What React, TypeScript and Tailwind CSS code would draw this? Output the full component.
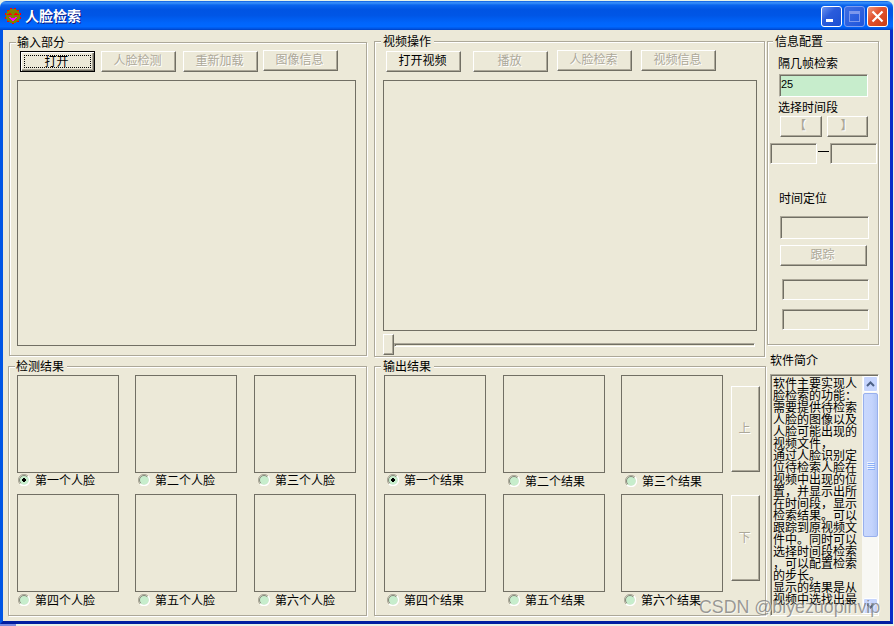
import type { ReactNode } from "react";

const cjk = "font-['Liberation_Sans','Noto_Sans_CJK_SC',sans-serif]";

function Group({ title, className, legend, children }: { title: string; className: string; legend: string; children: ReactNode }) {
  return (
    <section className={`flex flex-col items-start border border-[#aca899] shadow-[1px_1px_0_#fff,inset_1px_1px_0_#fff] ${className}`}>
      <h2 className={`-mt-[7px] h-3 shrink-0 bg-[#ece9d8] pt-px ${legend}`}>{title}</h2>
      {children}
    </section>
  );
}

function Button({ className, children, disabled = true }: { className: string; children: ReactNode; disabled?: boolean }) {
  return (
    <button
      className={`flex shrink-0 items-center justify-center border border-t-white border-l-white border-r-[#716f64] border-b-[#716f64] pr-[2px] pb-px shadow-[inset_-1px_-1px_0_#aca899] ${
        disabled ? "text-[#aca899] [text-shadow:1px_1px_0_#fff]" : "text-black"
      } ${className}`}
    >
      {children}
    </button>
  );
}

function Sunken({ className, children }: { className: string; children?: ReactNode }) {
  return (
    <div className={`shrink-0 border border-t-[#aca899] border-l-[#aca899] border-r-white border-b-white shadow-[inset_1px_1px_0_#716f64] ${className}`}>
      {children}
    </div>
  );
}

function Radio({ checked }: { checked?: boolean }) {
  return (
    <svg width="12" height="12" viewBox="0 0 12 12" className="shrink-0">
      <circle cx="6" cy="6" r="4.8" fill="#c7edcc" />
      <path d="M2 10A5.5 5.5 0 0 1 10 2" fill="none" stroke="#aca899" />
      <path d="M2.8 9.2A4.5 4.5 0 0 1 9.2 2.8" fill="none" stroke="#716f64" strokeWidth="0.8" />
      <path d="M10 2A5.5 5.5 0 0 1 2 10" fill="none" stroke="#fff" strokeWidth="1.2" />
      {checked && <path d="M5 4h2v1h1v2H7v1H5V7H4V5h1z" fill="#000" />}
    </svg>
  );
}

function Slot({ label, checked, shift }: { label: string; checked?: boolean; shift: string }) {
  return (
    <div className="flex h-[119px] w-[102px] flex-col">
      <div className="h-[98px] w-[102px] shrink-0 border border-[#716f64]" />
      <label className={`flex h-[13px] items-start gap-[5px] ${shift}`}>
        <Radio checked={checked} />
        <span className="pt-px">{label}</span>
      </label>
    </div>
  );
}

const intro = `软件主要实现人
脸检索的功能：
需要提供待检索
人脸的图像以及
人脸可能出现的
视频文件，
通过人脸识别定
位待检索人脸在
视频中出现的位
置，并显示出所
在时间段，显示
检索结果。可以
跟踪到原视频文
件中。同时可以
选择时间段检索
，可以配置检索
的步长。
显示的结果是从
视频中选找出最`;

function FaceIcon() {
  return (
    <svg width="16" height="16" viewBox="0 0 16 16" shapeRendering="crispEdges">
      <path d="M5 1h6v1h2v1h1v2h1v6h-1v2h-1v1h-2v1H5v-1H3v-1H2v-2H1V5h1V3h1V2h2z" fill="#808000" />
      <path d="M5 0h2v1H5zM9 0h2v1H9zM2 2h2v1H2zM12 2h2v1h-2zM0 5h1v2H0zM15 5h1v2h-1zM0 9h1v2H0zM15 9h1v2h-1zM2 13h2v1H2zM12 13h2v1h-2zM7 15h2v1H7z" fill="#f00" />
      <path d="M4 5h2v1h1v1H2V6h2zM10 5h2v1h2v1H9V6h1z" fill="#f00" />
      <path d="M4 9h2v1h4V9h2v1h-1v1h-1v1H9v1H7v-1H6v-1H5v-1H4z" fill="#f0f" />
    </svg>
  );
}

function TitleBar() {
  return (
    <header className="flex h-[29px] shrink-0 items-center rounded-t-[6px] bg-[linear-gradient(180deg,#0a5be0_0%,#3c94fb_6%,#0b66ee_14%,#0054e3_30%,#0056e6_50%,#0065fb_75%,#0068ff_88%,#0053e0_96%,#003fc0_100%)] pr-[5px] pl-[5px]">
      <FaceIcon />
      <h1 className="mt-px ml-[4px] text-[14px] leading-[14px] font-bold text-white [text-shadow:1px_1px_0_#0a1883]">人脸检索</h1>
      <div className="mt-[2px] ml-auto flex gap-[2px]">
        <span className="flex size-[21px] items-end rounded-[3px] border border-white bg-[linear-gradient(135deg,#6c94f0,#2a5cdc_40%,#1b4fd2)] pb-[4px] pl-[4px]">
          <span className="h-[3px] w-[7px] bg-white" />
        </span>
        <span className="flex size-[21px] items-center justify-center rounded-[3px] border border-[#7c9df0] bg-[linear-gradient(135deg,#3f6ee2,#1e55dc)]">
          <span className="size-[11px] border border-t-[3px] border-[#7c98ec]" />
        </span>
        <span className="flex size-[21px] items-center justify-center rounded-[3px] border border-white bg-[linear-gradient(135deg,#f0987c,#e25431_40%,#cb3c12)]">
          <svg width="13" height="13" viewBox="0 0 13 13">
            <path d="M1.5 1.500l10 10M11.5 1.500l-10 10" stroke="#fff" strokeWidth="2.2" />
          </svg>
        </span>
      </div>
    </header>
  );
}

function ScrollBar() {
  return (
    <div className="ml-auto flex h-[238px] w-[16px] shrink-0 flex-col items-center bg-[#f8f8f4]">
      <div className="flex h-[16px] w-[15px] items-center justify-center rounded-[2px] border border-white bg-[#c6d5fd]">
        <svg width="9" height="6" viewBox="0 0 9 6">
          <path d="M1 5l3.500-3.500L8 5" fill="none" stroke="#4d6185" strokeWidth="2" />
        </svg>
      </div>
      <div className="mt-px flex h-[144px] w-[15px] flex-col items-center justify-center gap-px rounded-[2px] border border-[#98b0ee] bg-[linear-gradient(90deg,#c9d8fc,#c4d4fd_60%,#b4c8f6)]">
        <i className="h-px w-[7px] bg-[#eef4fe] shadow-[1px_1px_0_#8cb0f8]" />
        <i className="h-px w-[7px] bg-[#eef4fe] shadow-[1px_1px_0_#8cb0f8]" />
        <i className="h-px w-[7px] bg-[#eef4fe] shadow-[1px_1px_0_#8cb0f8]" />
        <i className="h-px w-[7px] bg-[#eef4fe] shadow-[1px_1px_0_#8cb0f8]" />
      </div>
      <div className="mt-auto flex h-[16px] w-[15px] items-center justify-center rounded-[2px] border border-white bg-[#c6d5fd]">
        <svg width="9" height="6" viewBox="0 0 9 6">
          <path d="M1 1l3.500 3.500L8 1" fill="none" stroke="#4d6185" strokeWidth="2" />
        </svg>
      </div>
    </div>
  );
}

export default function App() {
  return (
    <div className={`relative flex h-[626px] w-[894px] flex-col overflow-hidden bg-[#e6f2e8] pt-px text-[12px] leading-[12px] whitespace-nowrap text-black ${cjk}`}>
      <div className="flex h-[623px] w-[893px] flex-col">
        <TitleBar />
        <div className="flex h-[594px] border-r-[3px] border-b-[3px] border-l-[3px] border-r-[#0a2cc8] border-b-[#001ea0] border-l-[#0055e5] bg-[#ece9d8]">
          <div className="flex w-[371px] shrink-0 flex-col">
            <Group title="输入部分" className="mt-[12px] ml-[6px] h-[314px] w-[358px]" legend="ml-[6px] pl-px pr-[3px]">
              <div className="mt-[2px] ml-[10px] flex h-[22px] items-start">
                <button className="mt-px flex h-[21px] w-[75px] border border-black p-[3px] shadow-[inset_1px_1px_0_#fff,inset_-1px_-1px_0_#716f64,inset_-2px_-2px_0_#aca899]">
                  <span className="flex h-full w-full items-center justify-center border border-dotted border-black pr-[2px]">打开</span>
                </button>
                <Button className="mt-px ml-[6px] h-[21px] w-[75px]">人脸检测</Button>
                <Button className="mt-px ml-[7px] h-[21px] w-[75px]">重新加载</Button>
                <Button className="ml-[5px] h-[21px] w-[75px]">图像信息</Button>
              </div>
              <div className="mt-[8px] ml-[7px] h-[266px] w-[339px] border border-[#716f64]" />
            </Group>
            <Group title="检测结果" className="mt-[10px] ml-[5px] h-[250px] w-[359px]" legend="ml-[6px] pl-px pr-[3px]">
              <div className="mt-[3px] ml-[8px] flex">
                <div className="flex flex-col">
                  <Slot label="第一个人脸" checked shift="mt-px ml-px" />
                  <Slot label="第四个人脸" shift="mt-[2px] ml-px" />
                </div>
                <div className="ml-[16px] flex flex-col">
                  <Slot label="第二个人脸" shift="mt-px ml-[3px]" />
                  <Slot label="第五个人脸" shift="mt-[2px] ml-[3px]" />
                </div>
                <div className="ml-[17px] flex flex-col">
                  <Slot label="第三个人脸" shift="mt-px ml-[4px]" />
                  <Slot label="第六个人脸" shift="mt-[2px] ml-[4px]" />
                </div>
              </div>
            </Group>
          </div>

          <div className="flex w-[393px] shrink-0 flex-col">
            <Group title="视频操作" className="mt-[11px] h-[316px] w-[391px]" legend="ml-[6px] pl-[2px] pr-[3px]">
              <div className="mt-[3px] ml-[11px] flex h-[22px] items-start">
                <Button disabled={false} className="mt-px h-[21px] w-[75px]">打开视频</Button>
                <Button className="mt-px ml-[12px] h-[21px] w-[75px]">播放</Button>
                <Button className="ml-[9px] h-[21px] w-[75px]">人脸检索</Button>
                <Button className="ml-[9px] h-[21px] w-[75px]">视频信息</Button>
              </div>
              <div className="mt-[8px] ml-[8px] h-[251px] w-[374px] border border-[#716f64]" />
              <div className="mt-[3px] ml-[8px] flex h-[21px]">
                <div className="h-[21px] w-[11px] border border-t-white border-l-white border-r-[#716f64] border-b-[#716f64] shadow-[inset_-1px_-1px_0_#aca899]" />
                <Sunken className="mt-[9px] h-[4px] w-[361px]" />
              </div>
            </Group>
            <Group title="输出结果" className="mt-[9px] h-[250px] w-[392px]" legend="ml-[6px] pl-[2px] pr-[3px]">
              <div className="mt-[3px] ml-[9px] flex">
                <div className="flex flex-col">
                  <Slot label="第一个结果" checked shift="mt-px ml-[3px]" />
                  <Slot label="第四个结果" shift="mt-[2px] ml-[3px]" />
                </div>
                <div className="ml-[17px] flex flex-col">
                  <Slot label="第二个结果" shift="mt-[2px] ml-[5px]" />
                  <Slot label="第五个结果" shift="mt-[2px] ml-[5px]" />
                </div>
                <div className="ml-[16px] flex flex-col">
                  <Slot label="第三个结果" shift="mt-[2px] ml-[4px]" />
                  <Slot label="第六个结果" shift="mt-[2px] ml-[3px]" />
                </div>
                <div className="mt-[11px] ml-[8px] flex flex-col gap-[23px]">
                  <Button className="h-[86px] w-[29px]">上</Button>
                  <Button className="h-[86px] w-[29px]">下</Button>
                </div>
              </div>
            </Group>
          </div>

          <div className="flex flex-1 flex-col items-start">
            <Group title="信息配置" className="mt-[11px] h-[304px] w-[112px] shrink-0" legend="ml-[5px] pl-[2px] pr-[3px]">
              <div className="mt-[10px] ml-[10px] h-[12px] pt-px">隔几帧检索</div>
              <Sunken className="mt-[5px] ml-[11px] h-[23px] w-[89px] bg-[#c7edcc] pt-[3px] pl-px text-[11px]">25</Sunken>
              <div className="mt-[4px] ml-[10px] h-[12px] pt-px">选择时间段</div>
              <div className="mt-[3px] ml-[12px] flex gap-[5px]">
                <Button className="h-[21px] w-[42px] font-bold">【</Button>
                <Button className="h-[21px] w-[41px] font-bold">】</Button>
              </div>
              <div className="mt-[6px] ml-[2px] flex">
                <Sunken className="h-[21px] w-[47px]" />
                <span className="mt-[8px] mr-px ml-px h-px w-[11px] bg-black" />
                <Sunken className="h-[21px] w-[47px]" />
              </div>
              <div className="mt-[28px] ml-[11px] h-[12px] pt-px">时间定位</div>
              <Sunken className="mt-[12px] ml-[12px] h-[23px] w-[89px]" />
              <Button className="mt-[6px] ml-[12px] h-[21px] w-[87px]">跟踪</Button>
              <Sunken className="mt-[13px] ml-[14px] h-[21px] w-[87px]" />
              <Sunken className="mt-[9px] ml-[14px] h-[21px] w-[87px]" />
            </Group>
            <h2 className="mt-[9px] ml-[3px] h-[12px] pt-px">软件简介</h2>
            <Sunken className="mt-[8px] ml-[3px] flex h-[242px] w-[109px] pt-px pl-[2px]">
              <p className="pt-[2px] whitespace-pre">{intro}</p>
              <ScrollBar />
            </Sunken>
          </div>
        </div>
      </div>
      <div className="h-[2px] w-[16px] bg-[#7a8be0]" />
      <div className="absolute top-[597px] left-[699px] font-['Liberation_Sans',sans-serif] text-[17.8px] leading-[20px] text-[#707070b0] [text-shadow:1px_1px_0_#ffffff90]">
        CSDN @biyezuopinvip
      </div>
    </div>
  );
}
